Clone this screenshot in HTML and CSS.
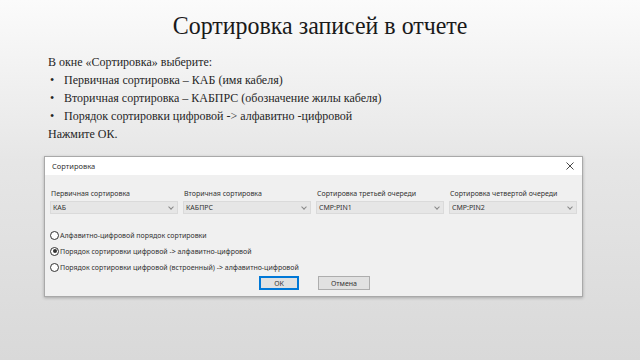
FILE: index.html
```html
<!DOCTYPE html>
<html lang="ru">
<head>
  <meta charset="UTF-8" />
  <title>Сортировка записей в отчете</title>
  <link rel="stylesheet" href="styles.css">
</head>
<body>
  <!-- slide title -->
  <h1 class="slide-title"><span>Сортировка записей в отчете</span></h1>

  <!-- slide text -->
  <div class="slide-text">
    <p>В окне «Сортировка» выберите:</p>
    <ul>
      <li>Первичная сортировка – КАБ (имя кабеля)</li>
      <li>Вторичная сортировка – КАБПРС (обозначение жилы кабеля)</li>
      <li>Порядок сортировки цифровой -&gt; алфавитно -цифровой</li>
    </ul>
    <p>Нажмите ОК.</p>
  </div>

  <!-- dialog screenshot -->
  <div class="dialog">
    <div class="dialog-head">
      <span>Сортировка</span>
      <svg class="close" width="8" height="8" viewBox="0 0 8 8">
        <path d="M0.5 0.5 L7.5 7.5 M7.5 0.5 L0.5 7.5" stroke="#333" stroke-width="0.9" fill="none"/>
      </svg>
    </div>
    <div class="dialog-body">
      <div class="fields">
        <div class="field">
          <div class="field-label">Первичная сортировка</div>
          <div class="combo"><span>КАБ</span><i class="arrow"></i></div>
        </div>
        <div class="field">
          <div class="field-label">Вторичная сортировка</div>
          <div class="combo"><span>КАБПРС</span><i class="arrow"></i></div>
        </div>
        <div class="field">
          <div class="field-label">Сортировка третьей очереди</div>
          <div class="combo"><span>CMP:PIN1</span><i class="arrow"></i></div>
        </div>
        <div class="field">
          <div class="field-label">Сортировка четвертой очереди</div>
          <div class="combo"><span>CMP:PIN2</span><i class="arrow"></i></div>
        </div>
      </div>

      <div class="radios">
        <div class="radio"><i class="dot"></i>Алфавитно-цифровой порядок сортировки</div>
        <div class="radio checked"><i class="dot"></i>Порядок сортировки цифровой -&gt; алфавитно-цифровой</div>
        <div class="radio"><i class="dot"></i>Порядок сортировки цифровой (встроенный) -&gt; алфавитно-цифровой</div>
      </div>

      <div class="buttons">
        <div class="btn btn-ok">ОК</div>
        <div class="btn">Отмена</div>
      </div>
    </div>
  </div>
</body>
</html>
```

FILE: styles.css
```css
body {
  margin: 0;
  width: 640px;
  height: 360px;
  overflow: hidden;
  background: linear-gradient(#fbfbfb, #e6e6e6 45%, #d9d9d9);
  font-family: "Liberation Serif", serif;
  color: #262626;
}

/* slide title */
.slide-title {
  margin: 0;
  padding-top: 11px;
  text-align: center;
  font-weight: normal;
  font-size: 26px;
  line-height: 30px;
  color: #1a1a1a;
}
.slide-title span {
  display: inline-block;
  transform: scaleX(0.92);
}

/* slide text */
.slide-text {
  margin: 12px 0 0 48px;
  font-size: 12px;
  line-height: 18px;
}
.slide-text p {
  margin: 0;
}
.slide-text ul {
  margin: 0;
  padding: 0;
  list-style: none;
}
.slide-text li {
  position: relative;
  padding-left: 16px;
}
.slide-text li::before {
  content: "•";
  position: absolute;
  left: 2px;
}

/* dialog */
.dialog {
  margin: 13px 0 0 44px;
  width: 537px;
  height: 139px;
  border: 1px solid #a9a9a9;
  background: #f0f0f0;
  font-family: "Noto Sans", sans-serif;
  font-size: 7px;
  color: #333;
  box-shadow: 0 1px 3px rgba(0, 0, 0, 0.25);
}
.dialog-head {
  height: 18px;
  background: #ffffff;
  display: flex;
  align-items: center;
  justify-content: space-between;
  padding: 0 8px 0 7px;
  font-size: 7.5px;
}
.dialog-body {
  padding: 14px 5px 0 5px;
}
.fields {
  display: flex;
  gap: 5px;
}
.field {
  flex: 1;
}
.field-label {
  padding-left: 1px;
  margin-bottom: 3px;
}
.combo {
  height: 11px;
  border: 1px solid #dadada;
  background: #e6e6e6;
  display: flex;
  align-items: center;
  justify-content: space-between;
  padding: 0 4px 0 2px;
}
.arrow {
  width: 3px;
  height: 3px;
  border-right: 1px solid #888;
  border-bottom: 1px solid #888;
  transform: rotate(45deg);
  margin-top: -2px;
}

/* radio buttons */
.radios {
  margin-top: 13px;
}
.radio {
  display: flex;
  align-items: center;
  height: 16px;
}
.dot {
  width: 7px;
  height: 7px;
  border: 1px solid #333;
  border-radius: 50%;
  background: #fff;
  margin-right: 1px;
  position: relative;
}
.radio.checked .dot::after {
  content: "";
  position: absolute;
  left: 1.5px;
  top: 1.5px;
  width: 4px;
  height: 4px;
  border-radius: 50%;
  background: #333;
}

/* buttons */
.buttons {
  display: flex;
  gap: 19px;
  margin-left: 209px;
  margin-top: 1px;
}
.btn {
  width: 50px;
  height: 12px;
  border: 1px solid #adadad;
  background: #e1e1e1;
  display: flex;
  align-items: center;
  justify-content: center;
}
.btn-ok {
  width: 38px;
  border: 1px solid #0078d7;
  box-shadow: inset 0 0 0 1px #0078d7;
}
```
